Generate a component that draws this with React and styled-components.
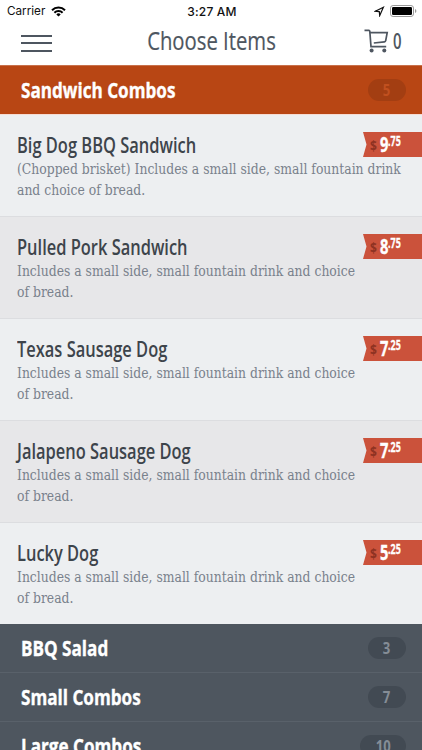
import React from 'react';
import styled, { createGlobalStyle } from 'styled-components';

const GlobalStyle = createGlobalStyle`
  * {
    box-sizing: border-box;
  }

  body {
    margin: 0;
    background-color: #fff;
    font-family: 'Open Sans', 'Noto Sans', sans-serif;
    overflow: hidden;
  }
`;

const Screen = styled.div`
  height: 750px;
  overflow: hidden;
`;

/* Condensed lettering: the glyphs are narrowed from one edge */
const Narrow = styled.span`
  display: inline-block;
  white-space: nowrap;
  transform: scaleX(${(props) => props.$ratio});
  transform-origin: ${(props) => props.$origin || 'left'} center;
`;

const StatusBar = styled.div`
  display: grid;
  grid-template-columns: 1fr auto 1fr;
  align-items: center;
  height: 22px;
  padding: 0 5px 0 7px;
  font-family: Inter, sans-serif;
  font-size: 11.7px;
  color: #111;
`;

const Carrier = styled.div`
  display: flex;
  align-items: center;
  gap: 6px;
`;

const Clock = styled.div`
  font-weight: 500;
  font-size: 12px;
  letter-spacing: 0.2px;
`;

const StatusIcons = styled.div`
  display: flex;
  align-items: center;
  justify-content: flex-end;
  gap: 5px;
`;

const NavBar = styled.header`
  display: grid;
  grid-template-columns: 1fr auto 1fr;
  height: 43px;
  padding: 0 20px 0 21px;
  color: #4e5660;
`;

const MenuButton = styled.div`
  display: flex;
  flex-direction: column;
  justify-content: space-between;
  width: 31px;
  height: 17px;
  margin-top: 12.5px;

  span {
    height: 2px;
    background-color: #4e5660;
  }
`;

const PageTitle = styled.h1`
  margin: 0;
  font-size: 26px;
  line-height: 36px;
  font-weight: 400;
  -webkit-text-stroke: 0.2px;
`;

const Cart = styled.div`
  display: flex;
  align-items: center;
  justify-content: flex-end;
  gap: 4px;
  width: 38px;
  height: 38px;
  margin-left: auto;
  font-size: 22px;
  font-weight: 600;

  svg {
    flex: none;
  }
`;

const CartCount = styled.span`
  width: 9px;
  line-height: 36px;
  margin-bottom: 2px;
`;

const Category = styled.div`
  display: flex;
  align-items: center;
  justify-content: space-between;
  height: 49px;
  padding: 0 16px 0 21px;
  background-color: ${(props) => (props.$open ? '#b84614' : '#4e565f')};
  border-${(props) => (props.$open ? 'top' : 'bottom')}: 1px solid ${(props) => (props.$open ? '#c8714b' : '#59616a')};
  font-size: 21px;
  font-weight: 700;
  color: #fff;
  -webkit-text-stroke: 0.35px;
`;

const Count = styled.span`
  display: flex;
  align-items: center;
  justify-content: center;
  min-width: 38px;
  height: 22px;
  padding: 0 14px;
  border-radius: 11px;
  background-color: ${(props) => (props.$open ? '#a33e12' : '#424a53')};
  color: ${(props) => (props.$open ? '#c1501f' : '#858d96')};
  font-size: 16px;
  -webkit-text-stroke: 0;
`;

const Item = styled.div`
  display: grid;
  grid-template-columns: 1fr 60px;
  align-content: start;
  height: 102px;
  padding: 17px 0 0 17px;
  background-color: #edeff1;
  border-top: 1px solid #dcdde0;

  &:first-child {
    border-top-color: #f6dcd3;
  }

  &:nth-child(even) {
    background-color: #e7e7e9;
  }
`;

const ItemName = styled.h2`
  margin: 0;
  font-size: 21.5px;
  line-height: 26px;
  font-weight: 600;
  color: #3d444b;
`;

const Description = styled.p`
  grid-column: 1 / -1;
  margin: 1px 0 0;
  font-family: 'DejaVu Serif', 'Liberation Serif', serif;
  font-size: 14.2px;
  line-height: 20.5px;
  color: #79818c;

  span {
    display: block;
    width: max-content;
  }
`;

const PriceTag = styled.div`
  display: flex;
  align-items: center;
  height: 25px;
  padding-left: 8px;
  background-color: #cb523b;
  clip-path: polygon(1px 0, 100% 0, 100% 100%, 1px 100%, 4.5px 50%);
  font-weight: 700;
  color: #fff;
`;

const Dollar = styled.span`
  width: 9.5px;
  font-size: 15px;
  color: #8f3222;
`;

const Whole = styled.span`
  width: 8px;
  margin-top: -2px;
  font-size: 21px;
  -webkit-text-stroke: 0.4px;
`;

const Cents = styled.span`
  margin-top: 2px;
  font-size: 13.5px;
  line-height: 14px;
  align-self: flex-start;
  -webkit-text-stroke: 0.3px;
`;

const WifiIcon = () => (
  <svg width="15" height="11" viewBox="0 0 15 11" fill="none" stroke="#000" strokeWidth="2">
    <path d="M1 4.3a9.2 9.2 0 0 1 13 0" />
    <path d="M3.4 6.8a5.8 5.8 0 0 1 8.2 0" />
    <path d="M7.5 10.6 5.3 8.4a3.1 3.1 0 0 1 4.4 0z" fill="#000" stroke="none" />
  </svg>
);

const LocationIcon = () => (
  <svg width="11" height="11" viewBox="0 0 11 11" fill="none" stroke="#111" strokeWidth="1.2">
    <path d="M9.4 1.2 1.4 5.2l3.9.4.4 4z" />
  </svg>
);

const BatteryIcon = () => (
  <svg width="27" height="12" viewBox="0 0 27 12">
    <rect x=".5" y=".5" width="23" height="11" rx="2.6" fill="none" stroke="#999" />
    <rect x="2" y="2" width="20" height="8" rx="1.2" fill="#000" />
    <path d="M25 4v4q1.4-.5 1.4-2T25 4z" fill="#999" />
  </svg>
);

const CartIcon = () => (
  <svg width="25" height="24" viewBox="0 0 25 24" fill="none" stroke="#4e5660" strokeWidth="1.7">
    <path d="M.5 1.4h4.4q.8 0 .9.9L7 17.6h15.2" />
    <path d="M5.8 3.7h17.4l-1.5 8q-.2 1-1.2 1.1L9.8 14" />
    <circle cx="7.6" cy="21.4" r="2" fill="#4e5660" stroke="none" />
    <circle cx="20.3" cy="21.4" r="2" fill="#4e5660" stroke="none" />
  </svg>
);

const shared = ['Includes a small side, small fountain drink and choice', 'of bread.'];

const items = [
  {
    name: 'Big Dog BBQ Sandwich',
    lines: ['(Chopped brisket) Includes a small side, small fountain drink', 'and choice of bread.'],
    price: '9.75',
  },
  { name: 'Pulled Pork Sandwich', lines: shared, price: '8.75' },
  { name: 'Texas Sausage Dog', lines: shared, price: '7.25' },
  { name: 'Jalapeno Sausage Dog', lines: shared, price: '7.25' },
  { name: 'Lucky Dog', lines: shared, price: '5.25' },
];

const categories = [
  { name: 'BBQ Salad', count: 3 },
  { name: 'Small Combos', count: 7 },
  { name: 'Large Combos', count: 10 },
];

const CategoryRow = ({ name, count, open }) => (
  <Category $open={open}>
    <Narrow $ratio={0.815}>{name}</Narrow>
    <Count $open={open}>
      <Narrow $ratio={0.82} $origin="center">{count}</Narrow>
    </Count>
  </Category>
);

const MenuItem = ({ item }) => {
  const [whole, cents] = item.price.split('.');
  return (
    <Item>
      <ItemName>
        <Narrow $ratio={0.765}>{item.name}</Narrow>
      </ItemName>
      <PriceTag>
        <Dollar><Narrow $ratio={0.8}>$</Narrow></Dollar>
        <Whole><Narrow $ratio={0.7}>{whole}</Narrow></Whole>
        <Cents><Narrow $ratio={0.66}>.{cents}</Narrow></Cents>
      </PriceTag>
      <Description>
        {item.lines.map((line) => (
          <Narrow key={line} $ratio={0.873}>{line}</Narrow>
        ))}
      </Description>
    </Item>
  );
};

const App = () => {
  return (
    <Screen>
      <GlobalStyle />
      <StatusBar>
        <Carrier>Carrier <WifiIcon /></Carrier>
        <Clock>3:27 AM</Clock>
        <StatusIcons>
          <LocationIcon />
          <BatteryIcon />
        </StatusIcons>
      </StatusBar>
      <NavBar>
        <MenuButton>
          <span />
          <span />
          <span />
        </MenuButton>
        <PageTitle>
          <Narrow $ratio={0.78} $origin="center">Choose Items</Narrow>
        </PageTitle>
        <Cart>
          <CartIcon />
          <CartCount>
            <Narrow $ratio={0.68}>0</Narrow>
          </CartCount>
        </Cart>
      </NavBar>
      <CategoryRow name="Sandwich Combos" count={5} open />
      <div>
        {items.map((item) => (
          <MenuItem key={item.name} item={item} />
        ))}
      </div>
      {categories.map((category) => (
        <CategoryRow key={category.name} name={category.name} count={category.count} />
      ))}
    </Screen>
  );
};

export default App;
